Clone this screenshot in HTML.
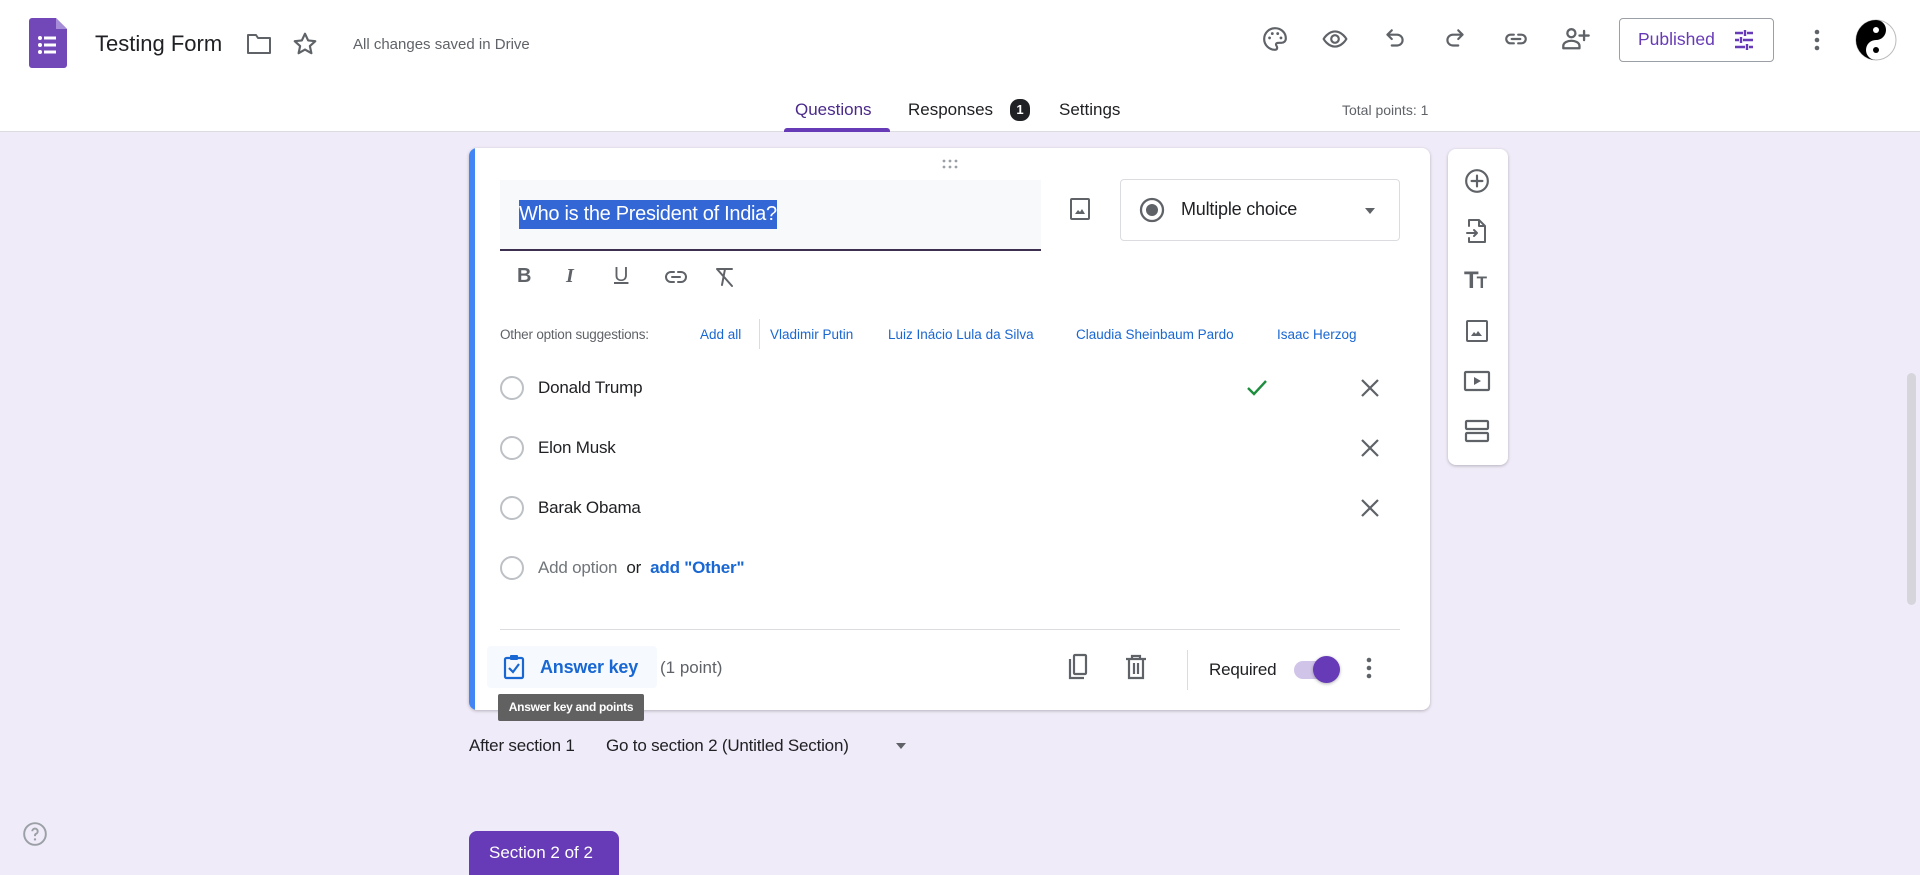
<!DOCTYPE html>
<html><head><meta charset="utf-8"><style>
*{box-sizing:border-box;margin:0;padding:0}
body{width:1920px;height:869px;overflow:hidden;background:#f0ebf8;font-family:"Liberation Sans",sans-serif;position:relative;color:#202124}
.a{position:absolute}
svg{display:block}
.hdr{left:0;top:0;width:1920px;height:132px;background:#fff;border-bottom:1px solid #dadce0}
.ic{fill:none;stroke:#5f6368;stroke-width:2;stroke-linecap:round;stroke-linejoin:round}
.t{white-space:nowrap}
.sg{font-size:13.5px;color:#1967d2;top:327px}
</style></head><body>
<div class="a hdr"></div>
<svg class="a" style="left:29px;top:18px" width="38" height="50" viewBox="0 0 38 50"><path d="M3 0H27L38 11V47a3 3 0 0 1-3 3H3a3 3 0 0 1-3-3V3a3 3 0 0 1 3-3z" fill="#7248b9"/><path d="M27 0L38 11H27z" fill="#a68bd8"/><g fill="#fff"><circle cx="11" cy="20" r="2"/><circle cx="11" cy="27" r="2"/><circle cx="11" cy="34" r="2"/><rect x="15" y="18.5" width="12" height="3"/><rect x="15" y="25.5" width="12" height="3"/><rect x="15" y="32.5" width="12" height="3"/></g></svg>
<div class="a t" style="left:95px;top:31px;font-size:22px;color:#202124">Testing Form</div>
<svg class="a" style="left:246px;top:32px" width="26" height="24" viewBox="0 0 26 24"><path class="ic" d="M2 3h8l2 3h12v15H2z"/></svg>
<svg class="a" style="left:292px;top:31px" width="26" height="26" viewBox="0 0 24 24"><path class="ic" d="M12 2.5l2.9 6.2 6.6.7-5 4.5 1.4 6.6L12 17.1l-5.9 3.4 1.4-6.6-5-4.5 6.6-.7z"/></svg>
<div class="a t" style="left:353px;top:36px;font-size:15px;color:#5f6368">All changes saved in Drive</div>
<svg class="a" style="left:1262px;top:26px" width="26" height="26" viewBox="0 0 24 24"><path class="ic" d="M12 2a10 10 0 1 0 0 20c1.5 0 2-1 2-2 0-1.5-1.5-2-1-3.5.4-1 1.5-1 3-1h2c2 0 4-1.5 4-4C22 6 17.5 2 12 2z"/><circle cx="7" cy="11" r="1.3" fill="#5f6368"/><circle cx="9.5" cy="7" r="1.3" fill="#5f6368"/><circle cx="14.5" cy="7" r="1.3" fill="#5f6368"/><circle cx="17.5" cy="11" r="1.3" fill="#5f6368"/></svg>
<svg class="a" style="left:1321px;top:26px" width="28" height="26" viewBox="0 0 24 24"><path class="ic" d="M1.5 12S5.5 5 12 5s10.5 7 10.5 7-4 7-10.5 7S1.5 12 1.5 12z"/><circle class="ic" cx="12" cy="12" r="3.5"/></svg>
<svg class="a" style="left:1382px;top:26px" width="26" height="26" viewBox="0 0 24 24"><path class="ic" d="M9 4L5 8l4 4M5 8h9a5 5 0 0 1 0 10H9"/></svg>
<svg class="a" style="left:1442px;top:26px" width="26" height="26" viewBox="0 0 24 24"><path class="ic" d="M15 4l4 4-4 4M19 8h-9a5 5 0 0 0 0 10h5"/></svg>
<svg class="a" style="left:1502px;top:26px" width="28" height="26" viewBox="0 0 24 24"><path class="ic" d="M10 8H7a4 4 0 0 0 0 8h3M14 8h3a4 4 0 0 1 0 8h-3M8 12h8"/></svg>
<svg class="a" style="left:1561px;top:25px" width="30" height="28" viewBox="0 0 26 24"><circle class="ic" cx="9" cy="7" r="3.5"/><path class="ic" d="M2 20v-2c0-3 4-4.5 7-4.5s7 1.5 7 4.5v2zM20 5v8M16 9h8"/></svg>
<div class="a" style="left:1619px;top:18px;width:155px;height:44px;border:1px solid #9aa0a6;border-radius:4px"></div>
<div class="a t" style="left:1638px;top:29px;font-size:17.5px;color:#673ab7">Published</div>
<svg class="a" style="left:1732px;top:28px" width="24" height="24" viewBox="0 0 24 24"><path d="M3 5h8M15 5h6M13 2v6M3 12h4M11 12h10M9 9v6M3 19h10M17 19h4M15 16v6" stroke="#673ab7" stroke-width="2.4" fill="none"/></svg>
<svg class="a" style="left:1812px;top:27px" width="10" height="26" viewBox="0 0 10 26"><circle cx="5" cy="5" r="2.3" fill="#5f6368"/><circle cx="5" cy="13" r="2.3" fill="#5f6368"/><circle cx="5" cy="21" r="2.3" fill="#5f6368"/></svg>
<svg class="a" style="left:1855px;top:19px" width="42" height="42" viewBox="0 0 42 42"><circle cx="21" cy="21" r="20" fill="#fff" stroke="#bbb"/><path d="M21 1a20 20 0 0 0 0 40 10 10 0 0 1 0-20 10 10 0 0 0 0-20z" fill="#000"/><circle cx="21" cy="11" r="3" fill="#fff"/><circle cx="21" cy="31" r="3" fill="#000"/></svg>
<div class="a t" style="left:795px;top:100px;font-size:17px;color:#4a2a8a">Questions</div>
<div class="a" style="left:784px;top:128px;width:106px;height:4px;background:#673ab7;border-radius:3px 3px 0 0"></div>
<div class="a t" style="left:908px;top:100px;font-size:17px;color:#202124">Responses</div>
<div class="a" style="left:1010px;top:99px;width:20px;height:22px;background:#202124;border-radius:9px;color:#fff;font-size:13px;text-align:center;line-height:22px;font-weight:bold">1</div>
<div class="a t" style="left:1059px;top:100px;font-size:17px;color:#202124">Settings</div>
<div class="a t" style="left:1342px;top:102px;font-size:14px;color:#5f6368">Total points: 1</div>
<div class="a" style="left:469px;top:148px;width:961px;height:562px;background:#fff;border-radius:8px;box-shadow:0 1px 3px rgba(0,0,0,.25);overflow:hidden"><div style="position:absolute;left:0;top:0;width:6px;height:100%;background:#4285f4"></div></div>
<svg class="a" style="left:940px;top:158px" width="20" height="12" viewBox="0 0 20 12"><g fill="#9aa0a6"><circle cx="4" cy="3" r="1.4"/><circle cx="10" cy="3" r="1.4"/><circle cx="16" cy="3" r="1.4"/><circle cx="4" cy="9" r="1.4"/><circle cx="10" cy="9" r="1.4"/><circle cx="16" cy="9" r="1.4"/></g></svg>
<div class="a" style="left:500px;top:180px;width:541px;height:71px;background:#f8f9fa;border-bottom:2px solid #3c2f4f"></div>
<div class="a t" style="left:519px;top:200px;height:29px;background:#3367d6;color:#fff;font-size:20px;line-height:29px;letter-spacing:-.3px">Who is the President of India?</div>
<svg class="a" style="left:1068px;top:197px" width="24" height="24" viewBox="0 0 24 24"><rect x="3" y="2" width="18" height="20" rx="1" fill="none" stroke="#5f6368" stroke-width="2"/><path d="M7 17l3-4 2 2 2-3 3 5z" fill="#5f6368"/></svg>
<div class="a" style="left:1120px;top:179px;width:280px;height:62px;border:1px solid #dadce0;border-radius:4px"></div>
<svg class="a" style="left:1138px;top:196px" width="28" height="28" viewBox="0 0 28 28"><circle cx="14" cy="14" r="11" fill="none" stroke="#5f6368" stroke-width="2.3"/><circle cx="14" cy="14" r="6" fill="#5f6368"/></svg>
<div class="a t" style="left:1181px;top:199px;font-size:18px;color:#202124;letter-spacing:-.2px">Multiple choice</div>
<div class="a" style="left:1365px;top:208px;border-left:5px solid transparent;border-right:5px solid transparent;border-top:6px solid #5f6368"></div>
<div class="a t" style="left:517px;top:265px;font-size:20px;font-weight:bold;color:#5f6368">B</div>
<div class="a t" style="left:566px;top:265px;font-size:20px;font-weight:bold;font-style:italic;color:#5f6368;font-family:'Liberation Serif',serif">I</div>
<div class="a t" style="left:614px;top:264px;font-size:20px;color:#5f6368;text-decoration:underline;text-decoration-thickness:2px">U</div>
<svg class="a" style="left:662px;top:267px" width="28" height="20" viewBox="0 0 24 20"><path class="ic" d="M10 5H7a5 5 0 0 0 0 10h3M14 5h3a5 5 0 0 1 0 10h-3M8 10h8"/></svg>
<svg class="a" style="left:712px;top:265px" width="24" height="24" viewBox="0 0 24 24"><path class="ic" d="M5 4h15M13 4l-3 16M5 4l15 17"/></svg>
<div class="a t" style="left:500px;top:327px;font-size:13.5px;color:#5f6368;letter-spacing:-.2px">Other option suggestions:</div>
<div class="a t sg" style="left:700px">Add all</div>
<div class="a" style="left:759px;top:319px;width:1px;height:30px;background:#dadce0"></div>
<div class="a t sg" style="left:770px">Vladimir Putin</div>
<div class="a t sg" style="left:888px">Luiz Inácio Lula da Silva</div>
<div class="a t sg" style="left:1076px">Claudia Sheinbaum Pardo</div>
<div class="a t sg" style="left:1277px">Isaac Herzog</div>
<div class="a" style="left:500px;top:376px;width:24px;height:24px;border:2px solid #bdc1c6;border-radius:50%"></div>
<div class="a t" style="left:538px;top:378px;font-size:17px;letter-spacing:-.2px">Donald Trump</div>
<div class="a" style="left:500px;top:436px;width:24px;height:24px;border:2px solid #bdc1c6;border-radius:50%"></div>
<div class="a t" style="left:538px;top:438px;font-size:17px;letter-spacing:-.2px">Elon Musk</div>
<div class="a" style="left:500px;top:496px;width:24px;height:24px;border:2px solid #bdc1c6;border-radius:50%"></div>
<div class="a t" style="left:538px;top:498px;font-size:17px;letter-spacing:-.2px">Barak Obama</div>
<div class="a" style="left:500px;top:556px;width:24px;height:24px;border:2px solid #bdc1c6;border-radius:50%"></div>
<div class="a t" style="left:538px;top:558px;font-size:17px;color:#70757a;letter-spacing:-.2px">Add option <span style="color:#202124">&nbsp;or&nbsp;</span> <span style="color:#1967d2;font-weight:bold">add "Other"</span></div>
<svg class="a" style="left:1245px;top:377px" width="24" height="22" viewBox="0 0 24 22"><path d="M3 11l6 6L21 4" fill="none" stroke="#1e8e3e" stroke-width="2.4"/></svg>
<svg class="a" style="left:1360px;top:378px" width="20" height="20" viewBox="0 0 20 20"><path d="M2 2l16 16M18 2L2 18" stroke="#5f6368" stroke-width="2.2"/></svg>
<svg class="a" style="left:1360px;top:438px" width="20" height="20" viewBox="0 0 20 20"><path d="M2 2l16 16M18 2L2 18" stroke="#5f6368" stroke-width="2.2"/></svg>
<svg class="a" style="left:1360px;top:498px" width="20" height="20" viewBox="0 0 20 20"><path d="M2 2l16 16M18 2L2 18" stroke="#5f6368" stroke-width="2.2"/></svg>
<div class="a" style="left:500px;top:629px;width:900px;height:1px;background:#dadce0"></div>
<div class="a" style="left:487px;top:646px;width:170px;height:42px;background:#f6f9fe;border-radius:4px"></div>
<svg class="a" style="left:502px;top:653px" width="24" height="28" viewBox="0 0 24 28"><rect x="3" y="5" width="18" height="20" rx="1.5" fill="none" stroke="#1967d2" stroke-width="2.2"/><rect x="8" y="2" width="8" height="5" rx="1" fill="#1967d2"/><path d="M7 15l4 4 6-8" fill="none" stroke="#1967d2" stroke-width="2.2"/></svg>
<div class="a t" style="left:540px;top:657px;font-size:18px;color:#1967d2;font-weight:bold;letter-spacing:-.2px">Answer key</div>
<div class="a t" style="left:660px;top:658px;font-size:17px;color:#5f6368">(1 point)</div>
<svg class="a" style="left:1064px;top:653px" width="26" height="28" viewBox="0 0 26 28"><path d="M6 6v19h14" fill="none" stroke="#5f6368" stroke-width="2.2"/><rect x="10" y="2" width="12" height="19" rx="1" fill="none" stroke="#5f6368" stroke-width="2.2"/></svg>
<svg class="a" style="left:1124px;top:653px" width="24" height="28" viewBox="0 0 24 28"><path d="M2 6h20M8 6V3h8v3M5 6v19h14V6M10 10v11M14 10v11" fill="none" stroke="#5f6368" stroke-width="2.2"/></svg>
<div class="a" style="left:1187px;top:650px;width:1px;height:40px;background:#dadce0"></div>
<div class="a t" style="left:1209px;top:660px;font-size:17px;letter-spacing:-.2px">Required</div>
<div class="a" style="left:1294px;top:661px;width:44px;height:18px;background:#d1c4e9;border-radius:9px"></div>
<div class="a" style="left:1313px;top:656px;width:27px;height:27px;background:#673ab7;border-radius:50%;box-shadow:0 1px 3px rgba(0,0,0,.3)"></div>
<svg class="a" style="left:1364px;top:655px" width="10" height="26" viewBox="0 0 10 26"><circle cx="5" cy="5" r="2.3" fill="#5f6368"/><circle cx="5" cy="13" r="2.3" fill="#5f6368"/><circle cx="5" cy="21" r="2.3" fill="#5f6368"/></svg>
<div class="a t" style="left:498px;top:694px;width:146px;height:27px;background:#616161;color:#fff;font-size:12px;line-height:27px;text-align:center;border-radius:2px;font-weight:bold;letter-spacing:-.3px">Answer key and points</div>
<div class="a t" style="left:469px;top:736px;font-size:17px;letter-spacing:-.2px">After section 1</div>
<div class="a t" style="left:606px;top:736px;font-size:17px;letter-spacing:-.2px">Go to section 2 (Untitled Section)</div>
<div class="a" style="left:896px;top:743px;border-left:5px solid transparent;border-right:5px solid transparent;border-top:6px solid #5f6368"></div>
<div class="a" style="left:469px;top:831px;width:150px;height:44px;background:#673ab7;border-radius:8px 8px 0 0;color:#fff;font-size:17px;padding:12px 0 0 20px;white-space:nowrap">Section 2 of 2</div>
<div class="a" style="left:1448px;top:149px;width:60px;height:316px;background:#fff;border-radius:8px;box-shadow:0 1px 3px rgba(0,0,0,.25)"></div>
<svg class="a" style="left:1464px;top:168px" width="26" height="26" viewBox="0 0 24 24"><circle class="ic" cx="12" cy="12" r="10"/><path class="ic" d="M12 7v10M7 12h10"/></svg>
<svg class="a" style="left:1465px;top:218px" width="24" height="26" viewBox="0 0 24 26"><path class="ic" d="M4 8V2h10l6 6v16H4v-4M14 2v6h6M2 15h10M9 12l3 3-3 3"/></svg>
<div class="a t" style="left:1464px;top:267px;font-size:24px;font-weight:bold;color:#5f6368;letter-spacing:-2px">T<span style="font-size:17px">T</span></div>
<svg class="a" style="left:1465px;top:319px" width="24" height="24" viewBox="0 0 24 24"><rect x="2" y="2" width="20" height="20" rx="1" fill="none" stroke="#5f6368" stroke-width="2"/><path d="M6 17l3-4 2 2 2-3 4 5z" fill="#5f6368"/></svg>
<svg class="a" style="left:1463px;top:369px" width="28" height="24" viewBox="0 0 28 24"><rect x="2" y="3" width="24" height="18" rx="1" fill="none" stroke="#5f6368" stroke-width="2.2"/><path d="M11 8v8l7-4z" fill="#5f6368"/></svg>
<svg class="a" style="left:1464px;top:419px" width="26" height="24" viewBox="0 0 26 24"><rect x="2" y="2" width="22" height="8" rx="1" fill="none" stroke="#5f6368" stroke-width="2.2"/><rect x="2" y="14" width="22" height="8" rx="1" fill="none" stroke="#5f6368" stroke-width="2.2"/></svg>
<div class="a" style="left:1907px;top:373px;width:9px;height:232px;background:#d7d5dc;border-radius:5px"></div>
<svg class="a" style="left:22px;top:821px" width="26" height="26" viewBox="0 0 24 24"><circle cx="12" cy="12" r="10" fill="none" stroke="#9aa0a6" stroke-width="1.8"/><path d="M9.5 9.5a2.5 2.5 0 1 1 3.5 2.3c-.7.4-1 .9-1 1.7v.5" fill="none" stroke="#9aa0a6" stroke-width="1.8"/><circle cx="12" cy="17" r="1.1" fill="#9aa0a6"/></svg>
</body></html>
